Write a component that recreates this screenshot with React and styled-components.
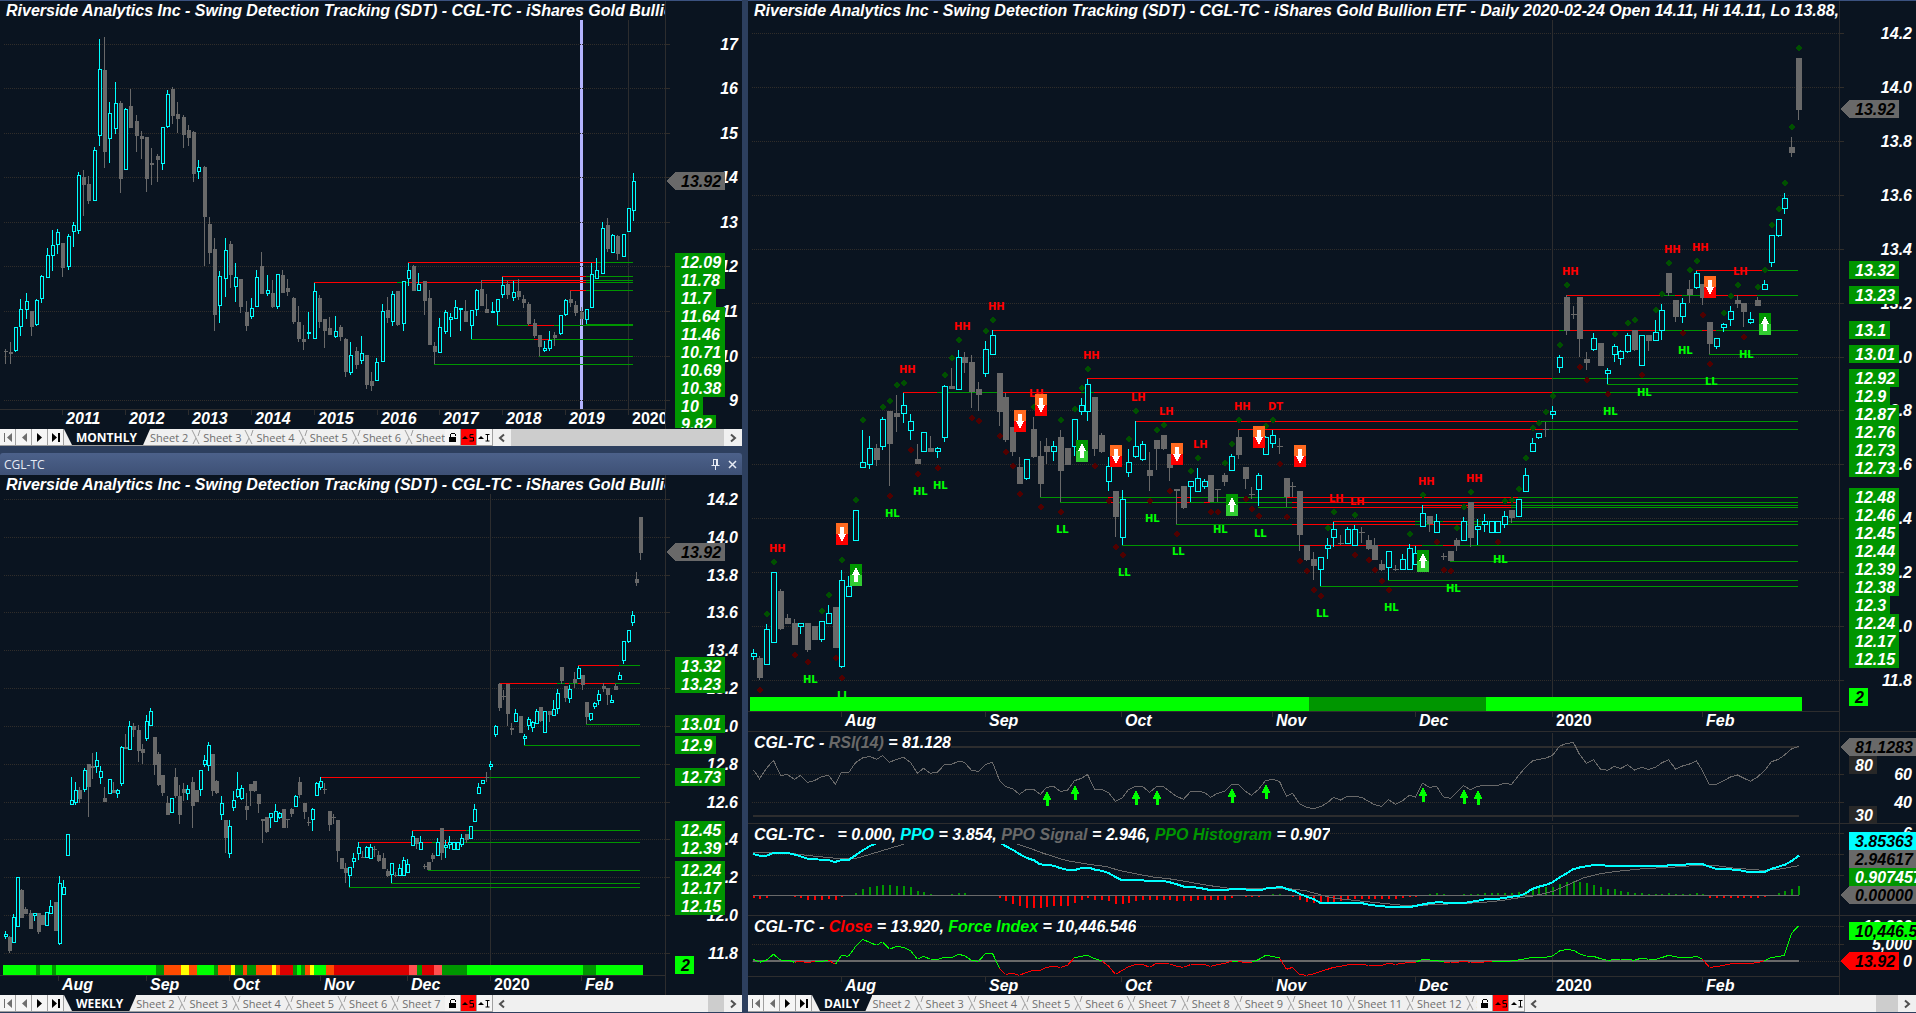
import React from "react";
import styled, { createGlobalStyle } from "styled-components";

const C = {
  bg: "#0a1420",
  frame: "#2d3f5e",
  cyan: "#00ffff",
  gray: "#696969",
  red: "#ff0000",
  green: "#009600",
  lime: "#00ff00",
  grid: "#302d2a",
  axis: "#2d2d2e",
};

const Global = createGlobalStyle`
  * { box-sizing: border-box; }
  html, body, #root { height: 100%; }
  body {
    margin: 0;
    background: ${C.frame};
    font-family: "Liberation Sans", Arial, sans-serif;
    overflow: hidden;
  }
  button { font: inherit; margin: 0; padding: 0; border: 0; }
`;

/* ---------- data ---------- */

// Daily bars: [rising, high, body top, body bottom, low], in ticks counted downwards.
const DAILY = [
  [1,1228,1240,1250,1262],[0,1250,1254,1314,1320],[1,1152,1168,1273,1273],[1,997,997,1207,1207],
  [0,1047,1053,1169,1172],[0,1122,1134,1152,1152],[0,1137,1149,1217,1217],[1,1150,1150,1160,1182],
  [0,1149,1149,1232,1238],[0,1158,1158,1200,1200],[1,1144,1144,1199,1206],[1,1095,1119,1151,1151],
  [0,1101,1101,1226,1226],[1,990,1021,1280,1286],[1,1008,1039,1070,1070],[1,811,811,902,902],
  [1,570,667,683,683],[1,588,625,674,689],[0,612,624,660,680],[1,531,538,620,632],
  [0,514,514,612,738],[0,465,519,531,576],[1,459,496,521,551],[1,522,544,570,600],
  [0,612,657,674,674],[1,577,577,635,635],[0,588,624,636,636],[1,621,625,635,656],
  [1,435,439,593,608],[0,384,438,449,449],[1,330,352,448,448],[0,337,351,369,399],
  [0,345,366,458,504],[0,426,447,465,514],[1,303,328,401,413],[1,272,286,344,344],
  [0,399,399,516,560],[0,459,471,602,608],[0,561,561,636,648],[0,651,681,732,732],
  [1,658,658,716,722],[0,531,567,651,656],[0,603,648,732,771],[0,594,618,636,672],
  [1,603,619,635,665],[0,570,591,693,786],[0,624,624,675,675],[1,538,538,620,648],
  [1,474,496,514,527],[1,417,433,515,543],[0,471,471,627,648],[0,579,585,636,641],
  [1,651,679,725,753],[0,753,753,831,891],[1,750,778,893,915],[1,627,667,698,713],
  [1,545,619,650,656],[1,603,613,659,665],[0,636,690,708,753],[0,600,600,627,690],
  [0,585,585,627,632],[0,642,642,684,723],[0,747,747,755,852],[0,738,738,804,809],
  [1,724,724,740,787],[1,684,715,755,755],[1,717,724,738,747],[0,705,705,788,788],
  [0,747,747,750,787],[0,699,705,726,738],[1,644,650,692,692],[0,570,591,645,657],
  [0,681,681,717,747],[0,741,762,765,777],[1,699,706,749,800],[1,590,592,643,643],
  [1,570,586,611,624],[0,594,618,621,642],[0,714,714,773,801],[0,726,738,741,771],
  [0,753,753,885,933],[0,915,915,960,963],[0,936,957,978,1020],[1,952,952,989,1038],
  [1,894,916,926,957],[1,846,868,892,923],[0,885,909,912,915],[1,862,868,911,911],
  [1,856,868,916,916],[0,861,876,879,909],[0,885,900,927,932],[0,894,915,960,960],
  [0,960,972,990,995],[1,934,934,983,1020],[0,975,988,990,995],[1,942,958,989,989],
  [1,912,925,989,989],[1,918,940,973,973],[1,797,820,860,860],[0,828,828,854,876],
  [1,822,844,878,878],[0,939,948,951,962],[0,933,933,965,965],[0,894,900,918,933],
  [1,831,844,902,902],[0,786,786,894,923],[1,837,859,868,915],[1,822,844,853,876],
  [1,844,844,878,878],[1,844,844,878,878],[1,813,829,853,866],[0,810,810,836,851],
  [1,778,778,829,829],[1,684,706,755,755],[1,594,610,635,635],[1,580,580,593,599],
  [0,546,567,570,591],[1,498,514,522,537],[1,345,352,383,399],[0,166,171,273,285],
  [0,198,222,225,237],[0,171,171,297,351],[0,336,357,369,390],[1,279,295,329,333],
  [0,309,309,378,378],[1,384,391,401,432],[1,312,319,344,366],[1,330,333,354,375],
  [1,279,286,335,341],[0,270,270,330,333],[1,286,286,377,377],[0,285,285,303,333],
  [1,240,277,302,302],[1,192,210,272,300],[0,99,99,159,170],[0,180,180,231,246],
  [1,174,190,230,251],[0,120,147,167,189],[1,93,100,143,147],[0,132,132,174,195],
  [0,246,246,312,343],[1,295,295,320,327],[1,249,253,263,276],[1,198,214,239,260],
  [0,166,180,192,204],[0,189,189,216,261],[1,216,238,248,252],[0,171,180,198,198],
  [1,120,133,149,149],[1,-14,-14,68,83],[1,-62,-62,-13,-7],[1,-141,-125,-94,-78],
  [0,-309,-279,-261,-249],[0,-546,-546,-390,-360],
];

const MONTHLY = [
  [0,1047,1053,1058,1092],[0,1026,1056,1062,1092],[1,982,983,1052,1056],[1,898,928,979,1008],
  [1,880,904,929,957],[0,933,933,981,1008],[1,898,902,974,978],[1,826,829,895,909],
  [1,744,766,832,834],[1,690,737,767,813],[1,688,697,734,762],[0,729,729,804,831],
  [1,703,709,800,810],[1,666,676,695,741],[1,516,526,692,702],[0,510,531,555,648],
  [0,528,552,603,612],[1,441,451,602,603],[1,117,208,407,438],[0,111,210,456,504],
  [1,306,340,416,489],[1,246,310,386,402],[0,303,309,537,579],[1,324,328,509,510],
  [0,267,318,384,384],[0,345,363,408,456],[0,393,408,417,477],[0,411,411,537,576],
  [0,444,489,495,555],[0,462,468,480,546],[1,382,382,491,510],[1,270,283,380,384],
  [0,261,267,348,372],[0,306,342,357,399],[0,345,351,405,444],[0,375,390,414,438],
  [0,393,396,522,546],[1,480,502,515,537],[0,498,501,651,798],[0,651,672,759,792],
  [0,714,747,945,993],[1,813,829,917,969],[1,714,751,836,891],[0,723,732,825,864],
  [1,789,832,860,906],[0,837,837,921,939],[0,903,936,978,993],[1,894,925,949,957],
  [1,810,832,919,921],[0,756,798,882,882],[1,825,871,880,888],[0,840,879,921,924],
  [1,822,823,920,927],[0,810,825,879,879],[0,837,864,876,888],[0,891,894,966,972],
  [0,918,966,1017,1026],[0,975,1017,1026,1050],[1,936,997,1000,1017],[1,849,874,1016,1017],
  [0,885,894,966,984],[0,957,957,993,1044],[0,951,984,1005,1005],[1,948,994,1010,1014],
  [0,975,981,1011,1023],[0,1014,1017,1116,1131],[1,1026,1066,1118,1125],[0,1041,1053,1095,1107],
  [1,1008,1060,1082,1092],[0,1065,1065,1155,1167],[0,1116,1143,1158,1173],[1,1074,1087,1141,1142],
  [1,912,934,1084,1086],[0,891,930,954,969],[1,873,883,965,978],[0,873,873,975,980],
  [1,843,844,970,993],[1,789,811,836,858],[0,795,798,873,873],[1,819,853,872,873],
  [0,843,843,903,945],[0,870,894,1035,1035],[0,1026,1038,1056,1092],[1,954,982,1057,1058],
  [1,930,937,995,1002],[1,939,952,959,1011],[1,900,922,955,957],[1,924,925,928,993],
  [0,900,933,966,966],[1,930,931,976,1017],[1,867,871,928,948],[0,840,867,918,918],
  [0,882,927,939,939],[1,906,934,936,939],[1,897,898,934,975],[1,831,856,884,894],
  [0,843,852,885,897],[1,843,877,892,903],[0,837,873,891,900],[0,885,897,910,924],
  [0,906,912,972,976],[0,957,969,1008,1014],[0,1005,1005,1041,1068],[1,1023,1045,1052,1056],
  [1,993,1021,1046,1053],[0,996,1005,1014,1038],[1,945,946,1000,1005],[1,897,900,944,948],
  [0,873,897,909,921],[0,903,915,939,948],[0,921,936,957,975],[1,927,928,959,972],
  [1,789,823,922,924],[1,774,811,835,839],[1,666,685,821,822],[0,654,675,747,756],
  [1,702,706,757,759],[0,705,708,762,780],[1,702,703,769,770],[1,624,625,694,696],
  [1,519,544,632,663],
];

// Swing levels: [tick, first bar, then colour and the bar at which it ends, ...]
const R = C.red;
const G = C.green;
const DAILY_LEVELS = [
  [91,138,R,148,G,153],
  [166,119,R,133,G,135,R,136,G,139,R,147,G,153],
  [271,35,R,118,G,119,R,132,G,139,R,141,G,153],
  [343,140,G,153],
  [415,49,R,117,G,153],
  [433,125,G,153],
  [457,22,R,27,G,36,R,48,G,50,R,117,G,153],
  [544,56,R,115,G,153],
  [568,71,R,116,G,153],
  [772,42,G,52,R,53,G,62,R,64,G,78,R,112,G,153],
  [787,45,G,52,R,53,G,62,R,64,G,66,R,67,G,79,R,112,G,153],
  [796,98,R,111,G,153],
  [802,74,G,79,R,111,G,153],
  [844,85,R,97,G,101,R,104,G,153],
  [853,62,G,79,R,97,G,99,R,104,G,153],
  [916,54,G,80,R,98,G,101,R,103,G,153],
  [964,102,G,153],
  [1021,93,G,153],
  [1039,83,G,153],
];

const WEEKLY_LEVELS = [
  [91,138,R,148,G,153],
  [166,119,R,133,G,135,R,136,G,138,R,147,G,153],
  [343,140,G,153],
  [433,125,G,153],
  [568,76,R,116,G,153],
  [796,98,R,111,G,153],
  [844,85,R,103,G,105,R,110,G,153],
  [964,102,G,153],
  [1021,93,G,153],
  [1039,83,G,153],
];

const MONTHLY_LEVELS = [
  [787,77,R,113,G,120],
  [829,95,R,111,G,120],
  [841,91,R,111,G,120],
  [847,59,R,75,G,77,R,111,G,120],
  [871,108,R,111,G,120],
  [973,111,G,120],
  [976,94,G,100,R,105,G,120],
  [1018,89,G,101,R,104,G,120],
  [1069,102,G,120],
  [1093,82,G,120],
];

const UP_MARKS = [
  2,3,10,11,13,15,16,19,20,21,22,28,29,30,34,35,41,45,47,48,49,55,56,59,60,64,65,69,70,71,75,76,
  84,85,88,96,98,103,104,105,110,111,112,113,114,115,116,117,118,119,126,128,129,132,133,134,137,
  138,142,143,144,147,148,149,150,151,152,153,
];
const DOWN_MARKS = [
  1,6,8,12,13,20,23,24,27,32,33,36,37,38,39,42,45,50,52,53,54,58,61,62,67,68,72,73,74,77,78,80,81,
  82,83,88,90,91,92,93,100,101,102,109,121,122,125,130,136,139,140,145,
];
const SWINGS = {
  HH: [3,22,30,35,49,71,98,105,119,134,138],
  LH: [41,56,60,65,85,88,144],
  DT: [76],
  HL: [8,20,24,27,58,68,93,102,109,125,130,136,145],
  LL: [13,45,54,62,74,83,140],
};
const SELLS = [[13,849],[39,510],[42,462],[53,615],[62,609],[74,558],[80,615],[140,108]];
const BUYS = [[15,972],[48,600],[70,762],[98,930],[148,219]];

const RSI = [
  210,236,205,181,226,224,238,226,247,242,230,226,253,217,219,188,174,169,178,167,187,178,172,187,
  220,205,220,216,194,193,184,187,211,214,193,187,241,260,266,283,268,268,283,262,259,274,271,242,
  235,223,268,268,278,304,293,269,259,259,277,260,260,274,289,298,275,274,277,292,280,274,254,254,
  274,286,268,242,238,244,289,280,311,322,326,320,308,292,300,289,289,292,304,314,319,299,313,302,
  286,291,250,262,259,291,295,278,257,269,259,256,256,256,250,253,227,202,183,178,175,166,139,130,
  128,163,190,179,207,211,199,206,194,210,202,208,202,189,179,207,198,192,183,212,255,253,242,231,
  225,234,244,231,212,185,178,165,147,139,
];
const RSI_ARROWS = [[43,273],[47,255],[56,270],[59,270],[70,263],[75,251],[98,261],[104,267],[106,270]];

const PPO = [
  [39,462],[58,467],[80,467],[100,459],[143,459],[165,464],[185,470],[205,477],[265,480],[285,486],
  [305,480],[327,479],[345,467],[370,450],[390,438],[412,429],[450,400],[740,400],[782,430],
  [819,450],[840,463],[861,474],[882,481],[900,493],[940,497],[963,505],[984,510],[1005,510],
  [1025,504],[1050,504],[1065,509],[1088,513],[1107,520],[1128,532],[1146,541],[1205,541],
  [1230,543],[1269,543],[1290,547],[1311,553],[1332,560],[1375,563],[1410,570],[1460,570],
  [1480,566],[1540,570],[1565,570],[1580,565],[1625,561],[1640,567],[1665,574],[1680,582],
  [1701,590],[1722,598],[1740,608],[1860,608],[1890,615],[1940,620],[2010,621],[2045,614],
  [2070,609],[2100,606],[2120,609],[2170,609],[2210,603],[2235,598],[2270,597],[2310,591],
  [2343,586],[2360,578],[2376,567],[2397,560],[2420,554],[2439,546],[2457,533],[2478,521],
  [2499,508],[2520,502],[2570,494],[2600,497],[2720,497],[2770,499],[2790,495],[2887,492],
  [2910,501],[2931,507],[2990,509],[3020,515],[3075,515],[3093,507],[3135,494],[3156,482],
  [3177,467],
];
const PPO_SIGNAL = [
  [39,458],[145,459],[200,466],[250,471],[300,476],[345,476],[390,463],[440,448],[500,430],
  [560,400],[760,400],[825,430],[870,445],[910,460],[980,482],[1040,492],[1100,500],[1140,512],
  [1200,524],[1240,531],[1300,538],[1340,545],[1410,557],[1460,564],[1550,566],[1650,566],
  [1700,573],[1740,584],[1780,594],[1850,602],[1930,610],[2010,618],[2100,613],[2220,608],
  [2290,601],[2325,595],[2380,588],[2439,574],[2478,557],[2530,534],[2580,521],[2630,514],
  [2710,506],[2825,500],[2880,495],[2930,497],[2980,504],[3070,511],[3120,507],[3177,497],
];
const PPO_BARS = [
  -5,-8,-5,0,0,0,-4,-6,-11,-11,-11,-8,-11,-4,0,6,18,24,28,31,31,28,28,25,13,9,4,0,0,3,6,6,0,0,0,0,
  -7,-16,-23,-31,-35,-35,-37,-34,-29,-29,-29,-22,-13,-7,-11,-13,-16,-23,-25,-22,-16,-13,-13,-11,
  -11,-11,-14,-16,-16,-13,-13,-13,-13,-11,-7,0,-4,-4,-4,0,3,3,0,-4,-11,-17,-22,-20,-19,-17,-14,
  -13,-10,-10,-8,-8,-10,-8,-8,-7,-4,-4,0,3,6,3,0,0,3,3,3,6,7,7,7,7,10,13,20,22,24,25,34,38,42,40,
  35,31,25,17,17,13,9,7,7,4,4,4,6,4,4,4,6,3,-5,-7,-7,-7,-7,-7,-7,-6,-3,0,6,13,19,28,
];
const FORCE = [
  777,787,780,763,780,780,787,784,788,784,784,781,793,766,769,740,718,727,736,725,748,739,742,752,
  778,769,778,778,772,774,763,767,781,784,760,760,805,823,820,826,817,811,811,802,799,802,796,773,
  769,766,776,782,798,823,811,800,794,793,802,790,790,791,799,802,794,794,794,799,794,790,784,784,
  788,787,779,766,769,774,808,802,823,826,822,814,808,802,799,795,793,793,796,796,796,790,793,790,
  787,787,778,780,781,786,787,787,784,787,787,786,784,784,784,783,780,776,772,772,772,768,753,748,
  751,761,769,769,776,781,779,777,778,781,774,778,778,773,766,770,774,773,769,778,802,800,796,792,
  790,790,790,788,782,772,770,765,700,678,
];

const TREND_COLORS = { L: C.lime, D: C.green, O: "#ff4b00", Y: "#ffff00", R: "#dc0000", P: "#ff5050" };
const WEEKLY_TREND = [
  [3,"L"],[36,"D"],[40,"L"],[52,"D"],[56,"L"],[156,"D"],[164,"O"],[181,"Y"],[189,"O"],[197,"L"],
  [214,"D"],[218,"O"],[231,"Y"],[235,"D"],[243,"O"],[247,"D"],[256,"O"],[272,"Y"],[276,"O"],
  [280,"R"],[293,"D"],[297,"L"],[301,"D"],[305,"O"],[310,"Y"],[314,"L"],[326,"O"],[334,"R"],
  [409,"P"],[417,"D"],[422,"R"],[434,"P"],[442,"D"],[467,"L"],[583,"D"],[596,"L"],[643,null],
];
const DAILY_TREND = [[750,"L"],[1309,"D"],[1486,"L"],[1802,null]];

const DAILY_MONTHS = [
  [841,"Aug"],[985,"Sep"],[1121,"Oct"],[1272,"Nov"],[1415,"Dec"],[1552,"2020"],[1702,"Feb"],
];
const WEEKLY_MONTHS = [
  [58,"Aug"],[146,"Sep"],[229,"Oct"],[320,"Nov"],[407,"Dec"],[490,"2020"],[581,"Feb"],
];
const MONTHLY_YEARS = [
  [62,"2011"],[125,"2012"],[188,"2013"],[251,"2014"],[314,"2015"],[377,"2016"],[439,"2017"],
  [502,"2018"],[565,"2019"],[628,"2020"],
];

/* ---------- scales ---------- */

const monthly = { x: (i) => Math.round(5.7 + i * 5.236), y: (t) => Math.round(t / 3 - 0.3), half: 2 };
const weekly = { x: (i) => Math.round(5.7 + i * 4.152), y: (t) => Math.round(644.2 + t * 0.2338), half: 2 };
const daily = { x: (i) => Math.round(753.6 + i * 6.833), y: (t) => Math.round(239.7 + t / 3), half: 3 };
const lower = (t) => 700 + t / 3;

/* ---------- chart parts ---------- */

const Drawing = styled.svg`
  display: block;
  position: absolute;
  inset: 0;
  width: 100%;
  height: 100%;
  shape-rendering: crispEdges;
  font-family: "Liberation Sans", Arial, sans-serif;
`;

const AxisText = styled.text`
  fill: ${(p) => p.$color || "#fff"};
  font-size: 16px;
  font-weight: 700;
  font-style: ${(p) => (p.$upright ? "normal" : "italic")};
  text-anchor: ${(p) => (p.$end ? "end" : "start")};
`;

const SwingText = styled.text`
  fill: ${(p) => p.$color};
  font: 700 10px "DejaVu Sans", Verdana, sans-serif;
`;

function Grid({ from, to, rows }) {
  return rows.map((y) => (
    <g key={y}>
      <line x1={from} x2={to} y1={y + 0.5} y2={y + 0.5} stroke={C.grid} strokeDasharray="1 1" />
      <line x1={to} x2={to + 4} y1={y + 0.5} y2={y + 0.5} stroke={C.grid} />
    </g>
  ));
}

function AxisLabels({ x, labels }) {
  return labels.map(([y, text]) => (
    <AxisText key={text} $end x={x} y={y + 6}>{text}</AxisText>
  ));
}

function TimeAxis({ from, to, y, marks, baseline }) {
  return (
    <g>
      <line x1={from} x2={to} y1={y + 0.5} y2={y + 0.5} stroke={C.axis} />
      {marks.map(([x, text]) => (
        <g key={text}>
          <line x1={x + 0.5} x2={x + 0.5} y1={y} y2={y + 6} stroke={C.axis} />
          <AxisText $upright={text === "2020"} x={x + 4} y={baseline}>{text}</AxisText>
        </g>
      ))}
    </g>
  );
}

function VLine({ x, from, to }) {
  return <line x1={x + 0.5} x2={x + 0.5} y1={from} y2={to} stroke={C.axis} />;
}

function Tag({ x, y, text, fill = C.green, color = "#fff", width, pointer }) {
  const w = width || { 1: 19, 2: 28, 4: 41, 5: 50 }[text.length];
  return (
    <g>
      <rect x={x} y={y} width={w} height={18} fill={fill} />
      {pointer && <path d={`M${x} ${y}L${x - 9} ${y + 9}L${x} ${y + 18}Z`} fill={fill} />}
      <AxisText $color={color} x={x + 6} y={y + 15}>{text}</AxisText>
    </g>
  );
}

function Levels({ scale, levels }) {
  return levels.map(([t, start, ...runs]) => {
    const y = scale.y(t);
    const parts = [];
    let from = start;
    for (let k = 0; k < runs.length; k += 2) {
      const x1 = scale.x(from) - 1;
      parts.push(<rect key={k} x={x1} y={y} width={scale.x(runs[k + 1]) - 1 - x1} height={1} fill={runs[k]} />);
      from = runs[k + 1];
    }
    return <g key={t}>{parts}</g>;
  });
}

function Candles({ scale, bars }) {
  return bars.map(([up, h, t, b, l], i) => {
    const x = scale.x(i);
    const top = scale.y(t);
    const bottom = Math.max(scale.y(b), top + 1);
    const color = up ? C.cyan : C.gray;
    const high = scale.y(h);
    return (
      <g key={i}>
        <rect x={x - 1} y={high} width={1} height={Math.max(scale.y(l) - high, 1)} fill={color} />
        {up ? (
          <rect
            x={x - scale.half + 0.5} y={top + 0.5}
            width={scale.half * 2 - 1} height={Math.max(bottom - top, 1)}
            fill={C.bg} stroke={color}
          />
        ) : (
          <rect x={x - scale.half} y={top} width={scale.half * 2} height={bottom - top} fill={color} />
        )}
      </g>
    );
  });
}

function Diamond({ x, y, fill }) {
  return <path d={`M${x} ${y - 3.5}l3.5 3.5l-3.5 3.5l-3.5 -3.5Z`} fill={fill} />;
}

function Badge({ x, y, buy }) {
  const arrow = buy
    ? "M6 3L10 11H8V18H4V11H2Z"
    : "M4 4H8V11H10L6 19L2 11H4Z";
  return (
    <g transform={`translate(${x - 6} ${y})`}>
      <rect width={12} height={11} fill={buy ? C.green : "#ff6a20"} />
      <rect y={11} width={12} height={11} fill={buy ? "#32cd32" : C.red} />
      <path d={arrow} fill="#fff" />
    </g>
  );
}

function Trend({ runs, y, height }) {
  return runs.slice(0, -1).map(([x, key], k) => (
    <rect key={x} x={x} y={y} width={runs[k + 1][0] - x} height={height} fill={TREND_COLORS[key]} />
  ));
}

/* ---------- layout ---------- */

const Workspace = styled.main`
  display: grid;
  grid-template-columns: minmax(0, 742fr) minmax(0, 1168fr);
  column-gap: 6px;
  height: 100vh;
  padding-bottom: 1px;
  background: ${C.frame};
`;

const Column = styled.div`
  display: flex;
  flex-direction: column;
  gap: 7px;
  min-width: 0;
  min-height: 0;
`;

const Pane = styled.section`
  display: flex;
  flex-direction: column;
  flex: ${(p) => p.$share} 1 0;
  min-width: 0;
  min-height: 0;
`;

const Plot = styled.div`
  position: relative;
  flex: ${(p) => p.$share || 1} 1 0;
  min-height: 0;
  overflow: hidden;
  background: ${C.bg};
  border-top: ${(p) => (p.$edge ? `1px solid ${p.$edge}` : "0")};
`;

const Legend = styled.h2`
  position: absolute;
  top: ${(p) => (p.$sub ? 1 : 0)}px;
  left: 4px;
  max-width: calc(100% - 81px);
  margin: 0;
  padding-left: 2px;
  overflow: hidden;
  white-space: pre;
  color: #fff;
  background: ${C.bg};
  font-size: 16px;
  line-height: 19px;
  font-weight: 700;
  font-style: italic;
`;

const Series = styled.span`
  color: ${(p) => p.$color};
`;

const Caption = styled.header`
  display: flex;
  align-items: center;
  justify-content: space-between;
  height: 22px;
  padding: 0 3px 0 4px;
  color: #e6ebf4;
  background: linear-gradient(#4c618a, #3e5176);
  border-radius: 3px 3px 0 0;
  font: 12px "Open Sans", "Noto Sans", sans-serif;
`;

const CaptionTools = styled.div`
  display: flex;
  gap: 4px;
`;

const CaptionButton = styled.button`
  display: grid;
  place-items: center;
  width: 13px;
  height: 16px;
  color: #e6ebf4;
  background: none;
`;

/* ---------- sheet bar ---------- */

const Bar = styled.nav`
  display: flex;
  height: 17px;
  overflow: hidden;
  background: #f0f0f0;
  font: 12px "Open Sans", "Noto Sans", sans-serif;
`;

const Step = styled.button`
  display: grid;
  place-items: center;
  flex: none;
  width: 16px;
  height: 17px;
  background: ${(p) => (p.$alert ? "#ff0000" : "#f5f5f5")};
  border-right: 1px solid #a0a0a0;
  border-bottom: 1px solid #a0a0a0;
`;

const Tabs = styled.div`
  display: flex;
  flex: ${(p) => p.$share} 1 0;
  min-width: 0;
  overflow: hidden;
  border-bottom: 1px solid #a0a0a0;
`;

const Tab = styled.button`
  flex: none;
  height: 16px;
  line-height: 15px;
  color: #6e6e6e;
  background: #f0f0f0;
  font-size: 11px;
`;

const ActiveTab = styled(Tab)`
  padding: 0 13px 0 12px;
  color: #fff;
  background: ${C.bg};
  font-weight: 700;
  font-size: 12px;
  clip-path: polygon(0 0, 100% 0, calc(100% - 7px) 100%, 8px 100%);
`;

const Divider = styled.svg`
  flex: none;
  width: 15px;
  height: 16px;
`;

const Scroll = styled.div`
  display: flex;
  flex: ${(p) => p.$share} 1 0;
  min-width: 0;
`;

const ScrollButton = styled.button`
  display: grid;
  place-items: center;
  flex: none;
  width: 18px;
  background: #f0f0f0;
`;

const Track = styled.div`
  display: flex;
  justify-content: flex-end;
  flex: 1;
`;

const Thumb = styled.div`
  width: ${(p) => p.$width};
  background: #cdcdcd;
`;

const STEPS = [
  ["First sheet", "#6e6e6e", "M4 3h1v9h-1zM12 3v9L7 7.500z"],
  ["Previous sheet", "#6e6e6e", "M11 3v9L6 7.500z"],
  ["Next sheet", "#000", "M5 3v9L10 7.500z"],
  ["Last sheet", "#000", "M4 3v9L9 7.500zM10 3h2v9h-2z"],
];

function SheetBar({ active, sheets, share, thumb }) {
  return (
    <Bar aria-label={`${active} sheets`}>
      {STEPS.map(([label, fill, d]) => (
        <Step key={label} aria-label={label}>
          <svg width="15" height="15"><path d={d} fill={fill} /></svg>
        </Step>
      ))}
      <Tabs $share={share[0]}>
        <ActiveTab>{active}</ActiveTab>
        {sheets.map((n) => (
          <React.Fragment key={n}>
            <Tab>{`Sheet ${n}`}</Tab>
            <Divider viewBox="0 0 15 16">
              <path d="M4 1L11 15M5 15L8 9M10 7L12 1" fill="none" stroke="#a0a0a0" />
            </Divider>
          </React.Fragment>
        ))}
      </Tabs>
      <Step aria-label="Lock">
        <svg width="13" height="13" shapeRendering="crispEdges">
          <path d="M3 6h7v5h-7zM5 2h4v1h-4zM4 3h1v3h-1zM9 3h1v2h-1z" fill="#000" />
        </svg>
      </Step>
      <Step $alert aria-label="Symbol link">
        <svg width="14" height="13">
          <path d="M1 8L4 5L7 8Z" fill="#000" />
          <path d="M12.500 3.500H9V6.500H12.500V10H8.500" fill="none" stroke="#000" />
        </svg>
      </Step>
      <Step aria-label="Interval link">
        <svg width="14" height="13">
          <path d="M1 8L4 5L7 8Z" fill="#000" />
          <path d="M8.500 3.500H12.500M8.500 10H12.500M10.500 3.500V10" fill="none" stroke="#000" />
        </svg>
      </Step>
      <Scroll $share={share[1]}>
        <ScrollButton aria-label="Scroll left">
          <svg width="8" height="10"><path d="M6 1.500L2 5L6 8.500" fill="none" stroke="#505050" strokeWidth="2" /></svg>
        </ScrollButton>
        <Track><Thumb $width={thumb} /></Track>
        <ScrollButton aria-label="Scroll right">
          <svg width="8" height="10"><path d="M2 1.500L6 5L2 8.500" fill="none" stroke="#505050" strokeWidth="2" /></svg>
        </ScrollButton>
      </Scroll>
    </Bar>
  );
}

/* ---------- charts ---------- */

const TITLE = "Riverside Analytics Inc - Swing Detection Tracking (SDT) - CGL-TC - iShares Gold Bullion ETF - ";

function MonthlyChart() {
  const rows = [44, 88, 133, 177, 222, 266, 311, 356, 400];
  const tags = ["12.09", "11.78", "11.7", "11.64", "11.46", "10.71", "10.69", "10.38", "10", "9.82"];
  return (
    <Plot $edge="#3b5280">
      <Drawing viewBox="0 1 742 428">
        <rect x={580} y={19} width={3} height={390} fill="#b4b4ff" />
        <Grid from={4} to={666} rows={rows} />
        <VLine x={628} from={19} to={409} />
        <VLine x={665} from={1} to={429} />
        <Levels scale={monthly} levels={MONTHLY_LEVELS} />
        <Candles scale={monthly} bars={MONTHLY} />
        <svg x="0" y="405" width="665" height="24" viewBox="0 405 665 24">
          <TimeAxis from={0} to={665} y={409} marks={MONTHLY_YEARS} baseline={424} />
        </svg>
        <AxisLabels x={738} labels={rows.map((y, k) => [y, String(17 - k)])} />
        <Tag x={675} y={172} text="13.92" fill={C.gray} color="#000" pointer />
        <svg x="0" y="1" width="742" height="427" viewBox="0 1 742 427">
          {tags.map((text, k) => <Tag key={text} x={675} y={253 + 18 * k} text={text} />)}
        </svg>
      </Drawing>
      <Legend>{TITLE}Monthly</Legend>
    </Plot>
  );
}

function WeeklyChart() {
  const rows = Array.from({ length: 13 }, (_, k) => Math.round(499 + 37.82 * k));
  const tags = [
    [657, "13.32"], [675, "13.23"], [715, "13.01"], [736, "12.9"], [768, "12.73"], [821, "12.45"],
    [839, "12.39"], [861, "12.24"], [879, "12.17"], [897, "12.15"],
  ];
  return (
    <Plot>
      <Drawing viewBox="0 475 742 520">
        <Grid from={4} to={666} rows={rows} />
        <VLine x={490} from={493} to={975} />
        <VLine x={665} from={475} to={995} />
        <Levels scale={weekly} levels={WEEKLY_LEVELS} />
        <Candles scale={weekly} bars={DAILY} />
        <Trend runs={WEEKLY_TREND} y={965} height={10} />
        <TimeAxis from={0} to={665} y={975} marks={WEEKLY_MONTHS} baseline={990} />
        <AxisLabels x={738} labels={rows.map((y, k) => [y, (14.2 - k * 0.2).toFixed(1)])} />
        <Tag x={675} y={543} text="13.92" fill={C.gray} color="#000" pointer />
        {tags.map(([y, text]) => <Tag key={text} x={675} y={y} text={text} />)}
        <Tag x={675} y={956} text="2" fill={C.lime} color="#000" />
      </Drawing>
      <Legend>{TITLE}Weekly</Legend>
    </Plot>
  );
}

function DailyChart() {
  const rows = Array.from({ length: 13 }, (_, k) => Math.round(33 + 53.92 * k));
  const tags = [
    [261, "13.32"], [286, "13.23"], [321, "13.1"], [345, "13.01"], [369, "12.92"], [387, "12.9"],
    [405, "12.87"], [423, "12.76"], [441, "12.73"], [459, "12.73"], [488, "12.48"], [506, "12.46"],
    [524, "12.45"], [542, "12.44"], [560, "12.39"], [578, "12.38"], [596, "12.3"], [614, "12.24"],
    [632, "12.17"], [650, "12.15"],
  ];
  return (
    <Plot $share={730} $edge="#3b5280">
      <Drawing viewBox="748 1 1168 730">
        <Grid from={752} to={1840} rows={rows} />
        <VLine x={1552} from={19} to={711} />
        <VLine x={1839} from={1} to={731} />
        <Levels scale={daily} levels={DAILY_LEVELS} />
        <Candles scale={daily} bars={DAILY} />
        {UP_MARKS.map((i) => (
          <Diamond key={i} x={daily.x(i)} y={daily.y(DAILY[i][1]) - 10} fill="#005000" />
        ))}
        {DOWN_MARKS.map((i) => (
          <Diamond key={i} x={daily.x(i)} y={daily.y(DAILY[i][4]) + 10} fill="#500000" />
        ))}
        {Object.entries(SWINGS).flatMap(([text, list]) =>
          list.map((i) => {
            const low = text === "HL" || text === "LL";
            const y = low ? daily.y(DAILY[i][4]) + 31 : daily.y(DAILY[i][1]) - 20;
            return (
              <SwingText key={text + i} $color={low ? C.lime : C.red} x={daily.x(i) - 5} y={y}>
                {text}
              </SwingText>
            );
          })
        )}
        {SELLS.map(([i, t]) => <Badge key={i} x={daily.x(i)} y={daily.y(t)} />)}
        {BUYS.map(([i, t]) => <Badge key={i} x={daily.x(i)} y={daily.y(t)} buy />)}
        <Trend runs={DAILY_TREND} y={697} height={14} />
        <TimeAxis from={748} to={1839} y={711} marks={DAILY_MONTHS} baseline={726} />
        <AxisLabels x={1912} labels={rows.map((y, k) => [y, (14.2 - k * 0.2).toFixed(1)])} />
        <Tag x={1849} y={100} text="13.92" fill={C.gray} color="#000" pointer />
        {tags.map(([y, text]) => <Tag key={y} x={1849} y={y} text={text} />)}
        <Tag x={1849} y={688} text="2" fill={C.lime} color="#000" />
      </Drawing>
      <Legend>{TITLE}Daily 2020-02-24 Open 14.11, Hi 14.11, Lo 13.88, Close 13.92</Legend>
    </Plot>
  );
}

function RsiChart() {
  const points = RSI.map((t, i) => `${daily.x(i) - 0.5},${lower(t)}`).join(" ");
  return (
    <Plot $share={91} $edge={C.axis}>
      <Drawing viewBox="748 732 1168 91">
        <Grid from={752} to={1840} rows={[774, 802]} />
        <rect x={753} y={746} width={1046} height={2} fill={C.axis} />
        <rect x={753} y={815} width={1046} height={2} fill={C.axis} />
        <VLine x={1552} from={733} to={821} />
        <VLine x={1839} from={732} to={823} />
        <polyline points={points} fill="none" stroke={C.gray} />
        {RSI_ARROWS.map(([i, t]) => {
          const x = daily.x(i);
          const y = Math.round(lower(t));
          return <path key={i} d={`M${x} ${y}L${x + 4.500} ${y + 9}H${x + 1.500}V${y + 15}H${x - 1.500}V${y + 9}H${x - 4.500}Z`} fill={C.lime} />;
        })}
        <AxisLabels x={1912} labels={[[774, "60"], [802, "40"]]} />
        <Tag x={1849} y={738} text="81.1283" width={67} fill={C.gray} color="#000" pointer />
        <Tag x={1849} y={756} text="80" fill="#282828" />
        <Tag x={1849} y={806} text="30" fill="#282828" />
      </Drawing>
      <Legend $sub>CGL-TC - <Series $color={C.gray}>RSI(14)</Series> = 81.128</Legend>
    </Plot>
  );
}

function PpoChart() {
  const path = (pts) => pts.map(([x, t]) => `${740 + x / 3},${lower(t)}`).join(" ");
  return (
    <Plot $share={91} $edge={C.axis}>
      <Drawing viewBox="748 824 1168 91">
        <clipPath id="ppo-area"><rect x={748} y={843} width={1092} height={72} /></clipPath>
        <Grid from={752} to={1840} rows={[833, 854, 875]} />
        <VLine x={1552} from={825} to={913} />
        <VLine x={1839} from={824} to={915} />
        {PPO_BARS.map((v, i) => {
          const h = Math.max(1, Math.round(Math.abs(v) / 3));
          return v ? (
            <rect key={i} x={daily.x(i) - 1} y={v > 0 ? 895 - h : 896} width={2} height={h} fill={v > 0 ? C.green : C.red} />
          ) : null;
        })}
        <rect x={753} y={895} width={1046} height={1} fill={C.gray} />
        <g clipPath="url(#ppo-area)" fill="none">
          <polyline points={path(PPO_SIGNAL)} stroke={C.gray} />
          <polyline points={path(PPO)} stroke={C.cyan} strokeWidth="2" />
        </g>
        <AxisLabels x={1912} labels={[[833, "6"]]} />
        <Tag x={1849} y={832} text="3.85363" width={67} fill={C.cyan} color="#000" />
        <Tag x={1849} y={850} text="2.94617" width={67} fill={C.gray} color="#000" />
        <Tag x={1849} y={868} text="0.907457" width={67} />
        <Tag x={1849} y={886} text="0.00000" width={67} fill={C.gray} color="#000" pointer />
      </Drawing>
      <Legend $sub>
        CGL-TC -{"   "}= 0.000, <Series $color={C.cyan}>PPO</Series> = 3.854,{" "}
        <Series $color={C.gray}>PPO Signal</Series> = 2.946,{" "}
        <Series $color={C.green}>PPO Histogram</Series> = 0.907
      </Legend>
    </Plot>
  );
}

function ForceChart() {
  return (
    <Plot $share={79} $edge={C.axis}>
      <Drawing viewBox="748 916 1168 79">
        <Grid from={752} to={1840} rows={[926, 944, 961]} />
        <VLine x={1552} from={917} to={976} />
        <VLine x={1839} from={916} to={995} />
        <rect x={753} y={960} width={1046} height={2} fill={C.gray} />
        {FORCE.slice(1).map((t, i) => (
          <line
            key={i}
            x1={daily.x(i) - 0.5} y1={lower(FORCE[i])}
            x2={daily.x(i + 1) - 0.5} y2={lower(t)}
            stroke={(FORCE[i] + t) / 2 <= 784 ? C.lime : C.red}
          />
        ))}
        <TimeAxis from={748} to={1839} y={976} marks={DAILY_MONTHS} baseline={991} />
        <AxisLabels x={1912} labels={[[926, "10,000"], [944, "5,000"], [961, "0"]]} />
        <Tag x={1849} y={922} text="10,446.546" width={67} fill={C.lime} color="#000" />
        <Tag x={1849} y={952} text="13.92" fill={C.red} color="#000" pointer />
      </Drawing>
      <Legend $sub>
        CGL-TC - <Series $color={C.red}>Close</Series> = 13.920,{" "}
        <Series $color={C.lime}>Force Index</Series> = 10,446.546
      </Legend>
    </Plot>
  );
}

export default function App() {
  return (
    <>
      <Global />
      <Workspace>
        <Column>
          <Pane $share={446}>
            <MonthlyChart />
            <SheetBar active="MONTHLY" sheets={[2, 3, 4, 5, 6, 7]} share={[380, 249]} thumb="100%" />
          </Pane>
          <Pane $share={559}>
            <Caption>
              <span>CGL-TC</span>
              <CaptionTools>
                <CaptionButton aria-label="Pin">
                  <svg width="9" height="13"><path d="M2.500 1v6M6.500 1v6M2 1.500h5M5.500 1v6M0.500 7.500h8M4.500 8v4" fill="none" stroke="currentColor" /></svg>
                </CaptionButton>
                <CaptionButton aria-label="Close">
                  <svg width="9" height="9"><path d="M1 1L8 8M8 1L1 8" fill="none" stroke="currentColor" strokeWidth="1.500" /></svg>
                </CaptionButton>
              </CaptionTools>
            </Caption>
            <WeeklyChart />
            <SheetBar active="WEEKLY" sheets={[2, 3, 4, 5, 6, 7]} share={[380, 249]} thumb="16px" />
          </Pane>
        </Column>
        <Pane $share={1}>
          <DailyChart />
          <RsiChart />
          <PpoChart />
          <ForceChart />
          <SheetBar
            active="DAILY"
            sheets={[2, 3, 4, 5, 6, 7, 8, 9, 10, 11, 12, 13]}
            share={[664, 390]}
            thumb="22px"
          />
        </Pane>
      </Workspace>
    </>
  );
}
